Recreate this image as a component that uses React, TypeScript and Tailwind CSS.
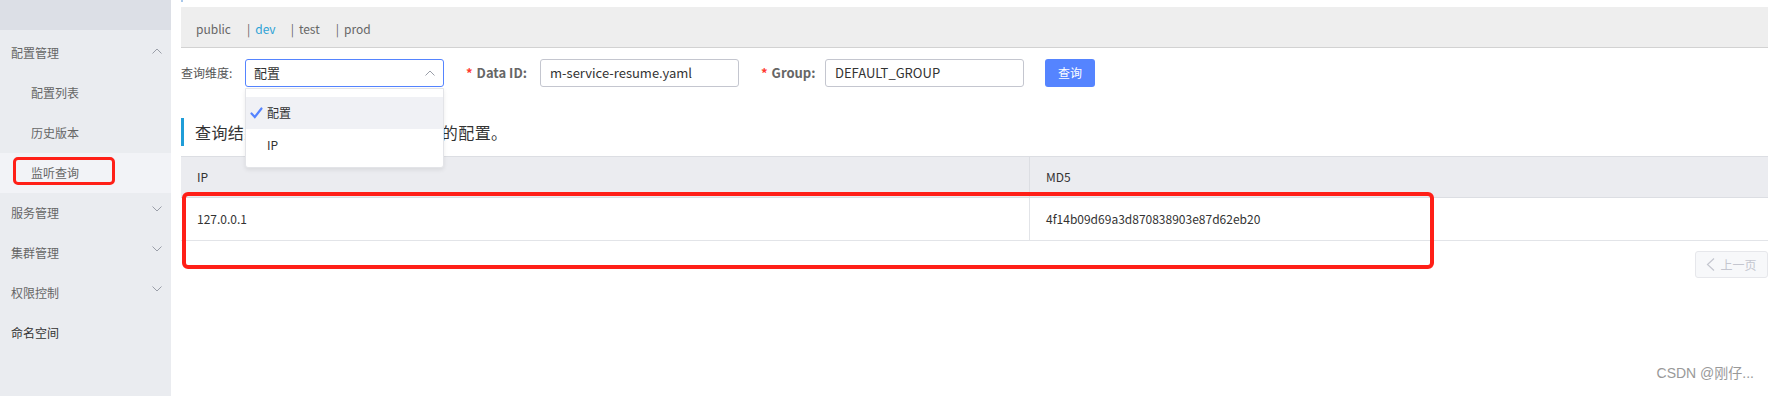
const font = { fontFamily: '"Noto Sans CJK SC", "Noto Sans", sans-serif' };

const Chevron = ({ up }: { up?: boolean }) => (
  <svg width="10" height="6" viewBox="0 0 10 6" fill="none" stroke="#9a9ea8" strokeWidth="1">
    {up ? <path d="M0.5 5.5 L5 1 L9.5 5.5" /> : <path d="M0.5 0.5 L5 5 L9.5 0.5" />}
  </svg>
);

const menu = [
  { label: '配置管理', arrow: 'up' },
  { label: '配置列表', sub: true },
  { label: '历史版本', sub: true },
  { label: '监听查询', sub: true, active: true },
  { label: '服务管理', arrow: 'down' },
  { label: '集群管理', arrow: 'down' },
  { label: '权限控制', arrow: 'down' },
  { label: '命名空间', dark: true },
];

const Sidebar = () => (
  <div className="w-[171px] shrink-0 bg-[#eaecf0] flex flex-col">
    <div className="h-[30px] bg-[#dcdfe6]" />
    <div className="mt-[3px] flex flex-col">
      {menu.map((m) => (
        <div
          key={m.label}
          className={`relative h-[40px] flex items-center justify-between text-[12px] ${m.sub ? 'pl-[31px]' : 'pl-[11px]'} pr-[9px] ${m.active ? 'bg-[#f2f3f7]' : ''} ${m.dark ? 'text-[#333]' : 'text-[#666]'}`}
        >
          <span>{m.label}</span>
          {m.arrow && (
            <span className={m.arrow === 'down' ? '-mt-[8px]' : '-mt-[4px]'}>
              <Chevron up={m.arrow === 'up'} />
            </span>
          )}
          {m.active && (
            <div className="absolute left-[13px] top-[4px] w-[102px] h-[28px] border-[3px] border-[#ff1f17] rounded-[5px]" />
          )}
        </div>
      ))}
    </div>
  </div>
);

const Field = ({ label, value, width }: { label: string; value: string; width: string }) => (
  <>
    <div className={`ml-[22px] ${width} shrink-0 flex items-center`}>
      <span className="text-[#ff3b30] text-[13px] font-bold">*</span>
      <span className="ml-[4px] text-[13px] font-bold text-[#666]">{label}</span>
    </div>
    <div className="w-[199px] shrink-0 h-[28px] border border-[#c4c6cf] rounded-[3px] flex items-center pl-[9px] text-[13px] text-[#333]">
      {value}
    </div>
  </>
);

export default function App() {
  return (
    <div className="w-[1769px] h-[396px] flex bg-white overflow-hidden relative" style={font}>
      <Sidebar />
      <div className="relative flex-1 pl-[10px] pr-[1px] flex flex-col">
        <div className="h-[7px] relative">
          <div className="absolute left-0 top-0 w-[2px] h-[2px] bg-[#a9c8ea]" />
        </div>

        <div className="h-[41px] bg-[#eeeeee] border-b border-[#d2d2d2] flex items-center pt-[3px] pl-[15px] text-[12px] text-[#666]">
          <span>public</span>
          <span className="ml-[16px]">|</span>
          <span className="ml-[5px] text-[#2fa3d6]">dev</span>
          <span className="ml-[15px]">|</span>
          <span className="ml-[5px]">test</span>
          <span className="ml-[16px]">|</span>
          <span className="ml-[5px]">prod</span>
        </div>

        <div className="mt-[11px] h-[28px] flex items-center">
          <span className="w-[64px] shrink-0 text-[12px] text-[#555]">查询维度:</span>
          <div className="relative w-[199px] shrink-0 h-[28px] border border-[#5584ff] rounded-[3px] flex items-center justify-between pl-[8px] pr-[8px] text-[13px] text-[#333]">
            <span>配置</span>
            <Chevron up />
            <div className="absolute -left-px top-[28px] w-[199px] h-[80px] bg-white border border-[#e3e4e8] rounded-b-[3px] shadow-[0_2px_4px_rgba(0,0,0,0.08)] py-[8px] z-10">
              <div className="h-[32px] bg-[#f0f1f5] flex items-center pl-[4px]">
                <svg width="13" height="12" viewBox="0 0 13 12" fill="none" stroke="#5584ff" strokeWidth="2.2" strokeLinecap="round">
                  <path d="M1.5 6.5 L4.8 10 L11.5 1.5" />
                </svg>
                <span className="ml-[4px] text-[12px] text-[#333]">配置</span>
              </div>
              <div className="h-[32px] flex items-center pl-[21px] text-[12px] text-[#333]">IP</div>
            </div>
          </div>
          <Field label="Data ID:" value="m-service-resume.yaml" width="w-[74px]" />
          <Field label="Group:" value="DEFAULT_GROUP" width="w-[64px]" />
          <button className="ml-[21px] w-[50px] h-[28px] bg-[#5584ff] rounded-[3px] text-white text-[12px]">查询</button>
        </div>

        <div className="mt-[31px] h-[28px] flex items-center border-l-[3px] border-[#1f9dd8] pl-[11px] text-[16px] tracking-[0.4px] text-[#333]">
          查询结果：共查询到 1 条满足要求的配置。
        </div>

        <div className="mt-[10px] flex flex-col text-[12px] text-[#333]">
          <div className="h-[42px] flex bg-[#ebecf0] border-t border-b border-[#dcdee3]">
            <div className="w-[849px] border-r border-[#dcdee3] flex items-center pl-[16px]">IP</div>
            <div className="flex-1 flex items-center pl-[16px]">MD5</div>
          </div>
          <div className="h-[43px] flex border-b border-[#e2e4e8]">
            <div className="w-[849px] border-r border-[#e2e4e8] flex items-center pl-[16px]">127.0.0.1</div>
            <div className="flex-1 flex items-center pl-[16px]">4f14b09d69a3d870838903e87d62eb20</div>
          </div>
        </div>

        <div className="mt-[10px] flex justify-end">
          <div className="w-[73px] h-[27px] border border-[#e6e7eb] bg-[#f7f8fa] rounded-[3px] flex items-center justify-center gap-[5px] text-[12px] text-[#c4c6cf]">
            <svg width="9" height="13" viewBox="0 0 9 13" fill="none" stroke="#c4c6cf" strokeWidth="1.2">
              <path d="M8 0.5 L1.5 6.5 L8 12.5" />
            </svg>
            <span>上一页</span>
          </div>
        </div>

        <div className="absolute left-[11px] top-[192px] w-[1252px] h-[77px] border-[4px] border-[#ff1f17] rounded-[6px]" />
      </div>

      <div className="absolute right-[15px] top-[363px] text-[14px] text-[#999]" style={{ fontFamily: '"Liberation Sans", "Noto Sans CJK SC", sans-serif' }}>
        CSDN @刚仔...
      </div>
    </div>
  );
}
